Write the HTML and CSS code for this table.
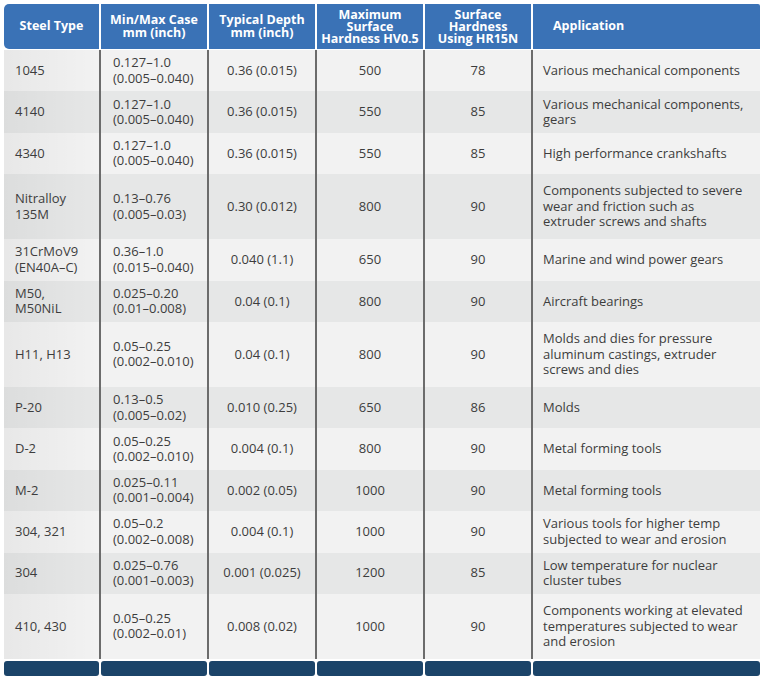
FILE: index.html
```html
<!DOCTYPE html>
<html lang="en">
<head>
<meta charset="utf-8">
<title>Nitriding Steel Types</title>
<link rel="stylesheet" href="styles.css">
</head>
<body>
<div class="table">
  <div class="head">
    <div class="hc first">Steel Type</div>
    <div class="hc">Min/Max Case<br>mm (inch)</div>
    <div class="hc">Typical Depth<br>mm (inch)</div>
    <div class="hc tight">Maximum<br>Surface<br>Hardness HV0.5</div>
    <div class="hc tight">Surface<br>Hardness<br>Using HR15N</div>
    <div class="hc app">Application</div>
  </div>
  <div class="body">
    <div class="row"><div class="c first">1045</div><div class="c range">0.127–1.0<br>(0.005–0.040)</div><div class="c mid">0.36 (0.015)</div><div class="c mid">500</div><div class="c mid">78</div><div class="c app">Various mechanical components</div></div>
    <div class="row"><div class="c first">4140</div><div class="c range">0.127–1.0<br>(0.005–0.040)</div><div class="c mid">0.36 (0.015)</div><div class="c mid">550</div><div class="c mid">85</div><div class="c app">Various mechanical components,<br>gears</div></div>
    <div class="row"><div class="c first">4340</div><div class="c range">0.127–1.0<br>(0.005–0.040)</div><div class="c mid">0.36 (0.015)</div><div class="c mid">550</div><div class="c mid">85</div><div class="c app">High performance crankshafts</div></div>
    <div class="row tall"><div class="c first">Nitralloy<br>135M</div><div class="c range">0.13–0.76<br>(0.005–0.03)</div><div class="c mid">0.30 (0.012)</div><div class="c mid">800</div><div class="c mid">90</div><div class="c app">Components subjected to severe<br>wear and friction such as<br>extruder screws and shafts</div></div>
    <div class="row"><div class="c first">31CrMoV9<br>(EN40A–C)</div><div class="c range">0.36–1.0<br>(0.015–0.040)</div><div class="c mid">0.040 (1.1)</div><div class="c mid">650</div><div class="c mid">90</div><div class="c app">Marine and wind power gears</div></div>
    <div class="row"><div class="c first">M50,<br>M50NiL</div><div class="c range">0.025–0.20<br>(0.01–0.008)</div><div class="c mid">0.04 (0.1)</div><div class="c mid">800</div><div class="c mid">90</div><div class="c app">Aircraft bearings</div></div>
    <div class="row tall"><div class="c first">H11, H13</div><div class="c range">0.05–0.25<br>(0.002–0.010)</div><div class="c mid">0.04 (0.1)</div><div class="c mid">800</div><div class="c mid">90</div><div class="c app">Molds and dies for pressure<br>aluminum castings, extruder<br>screws and dies</div></div>
    <div class="row"><div class="c first">P-20</div><div class="c range">0.13–0.5<br>(0.005–0.02)</div><div class="c mid">0.010 (0.25)</div><div class="c mid">650</div><div class="c mid">86</div><div class="c app">Molds</div></div>
    <div class="row"><div class="c first">D-2</div><div class="c range">0.05–0.25<br>(0.002–0.010)</div><div class="c mid">0.004 (0.1)</div><div class="c mid">800</div><div class="c mid">90</div><div class="c app">Metal forming tools</div></div>
    <div class="row"><div class="c first">M-2</div><div class="c range">0.025–0.11<br>(0.001–0.004)</div><div class="c mid">0.002 (0.05)</div><div class="c mid">1000</div><div class="c mid">90</div><div class="c app">Metal forming tools</div></div>
    <div class="row"><div class="c first">304, 321</div><div class="c range">0.05–0.2<br>(0.002–0.008)</div><div class="c mid">0.004 (0.1)</div><div class="c mid">1000</div><div class="c mid">90</div><div class="c app">Various tools for higher temp<br>subjected to wear and erosion</div></div>
    <div class="row"><div class="c first">304</div><div class="c range">0.025–0.76<br>(0.001–0.003)</div><div class="c mid">0.001 (0.025)</div><div class="c mid">1200</div><div class="c mid">85</div><div class="c app">Low temperature for nuclear<br>cluster tubes</div></div>
    <div class="row tall"><div class="c first">410, 430</div><div class="c range">0.05–0.25<br>(0.002–0.01)</div><div class="c mid">0.008 (0.02)</div><div class="c mid">1000</div><div class="c mid">90</div><div class="c app">Components working at elevated<br>temperatures subjected to wear<br>and erosion</div></div>
  </div>
  <div class="foot">
    <div class="fc"></div><div class="fc"></div><div class="fc"></div><div class="fc"></div><div class="fc"></div><div class="fc"></div>
  </div>
</div>
</body>
</html>
```

FILE: styles.css
```css
* { box-sizing: border-box; }

html, body {
  margin: 0;
  padding: 0;
  background: #ffffff;
}

body {
  padding: 4px;
  font-family: "Open Sans", "Liberation Sans", sans-serif;
  font-size: 13px;
  color: #3d3d3d;
}

.table {
  width: 756px;
  --cols: 95px 108px 108px 108px 108px 229px;
}

.head,
.row,
.foot {
  display: grid;
  grid-template-columns: var(--cols);
}

.head {
  height: 45px;
  background: #3a72b6;
  border-radius: 5px 2px 0 5px;
  margin-bottom: 1px;
}

.hc {
  display: flex;
  align-items: center;
  justify-content: center;
  text-align: center;
  color: #ffffff;
  font-weight: 700;
  font-size: 12.5px;
  line-height: 12.5px;
  border-left: 2px solid #ffffff;
}

.hc.tight {
  line-height: 12px;
}

.hc.first {
  border-left: 0;
}

.hc.app {
  justify-content: flex-start;
  text-align: left;
  padding-left: 20px;
}

.row {
  height: 41.4px;
  background: #f2f2f2;
}

.row:nth-child(even) {
  background: #e6e7e7;
}

.row.tall {
  height: 65px;
}

.c {
  display: flex;
  align-items: center;
  line-height: 15.5px;
  border-left: 2px solid #6c6c6c;
}

.c.first {
  border-left: 0;
  padding-left: 11px;
  background: linear-gradient(to right, rgba(0, 0, 0, 0.045), rgba(0, 0, 0, 0));
}

.c.range {
  padding-left: 12px;
}

.c.mid {
  justify-content: center;
  text-align: center;
}

.c.app {
  padding-left: 10px;
}

.foot {
  margin-top: 2px;
  height: 15px;
}

.fc {
  background: #1b4469;
  border-radius: 3px;
  margin-left: 2px;
}

.fc:first-child {
  margin-left: 0;
}
```
